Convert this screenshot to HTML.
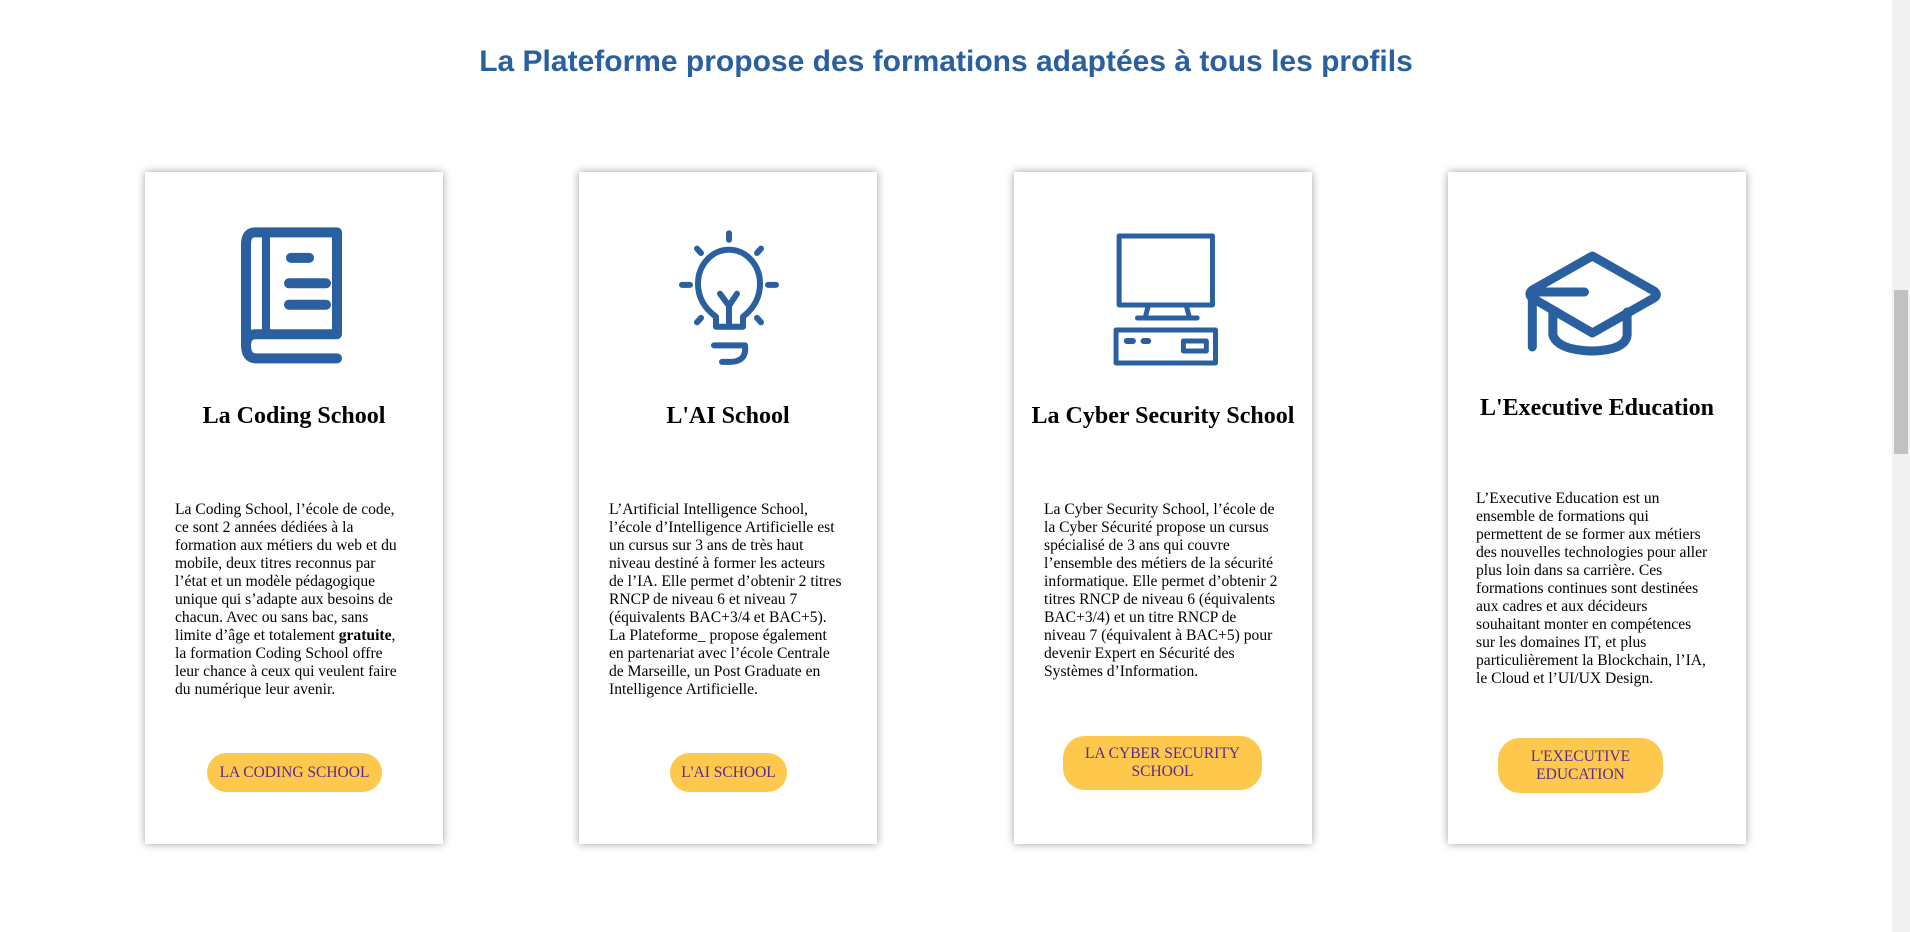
<!DOCTYPE html>
<html><head><meta charset="utf-8"><style>
html,body{margin:0;padding:0;width:1910px;height:932px;overflow:hidden;background:#fff;position:relative}
h1{position:absolute;left:0;width:1892px;top:45px;margin:0;text-align:center;font:bold 30px "Liberation Sans",sans-serif;color:#2a5fa0}
.card{position:absolute;top:172px;width:298px;height:672px;background:#fff;box-shadow:0 0 8px rgba(0,0,0,.38)}
.h{position:absolute;left:0;width:100%;text-align:center;font:bold 24px "Liberation Serif",serif;color:#000;white-space:nowrap}
.p{position:absolute;font:15.6px/18px "Liberation Serif",serif;color:#000;white-space:nowrap}
.b{position:absolute;background:#fdc84b;border-radius:22px;color:#5a2b8f;font:15.5px/18px "Liberation Serif",serif;text-align:center;display:flex;align-items:center;justify-content:center}
.sb{position:absolute;right:0;top:0;width:18px;height:932px;background:#f1f1f1}
.th{position:absolute;right:2px;top:290px;width:14px;height:164px;background:#c1c1c1}
svg{position:absolute;left:0;top:0}
svg *{vector-effect:non-scaling-stroke}
</style></head><body>
<h1>La Plateforme propose des formations adaptées à tous les profils</h1>

<div class="card" style="left:145px"></div>
<div class="card" style="left:579px"></div>
<div class="card" style="left:1014px"></div>
<div class="card" style="left:1448px"></div>

<div class="h" style="left:145px;width:298px;top:403px">La Coding School</div>
<div class="h" style="left:579px;width:298px;top:403px">L'AI School</div>
<div class="h" style="left:1014px;width:298px;top:403px">La Cyber Security School</div>
<div class="h" style="left:1448px;width:298px;top:395px">L'Executive Education</div>

<div class="p" style="left:175px;top:501px">La Coding School, l’école de code,<br>ce sont 2 années dédiées à la<br>formation aux métiers du web et du<br>mobile, deux titres reconnus par<br>l’état et un modèle pédagogique<br>unique qui s’adapte aux besoins de<br>chacun. Avec ou sans bac, sans<br>limite d’âge et totalement <b>gratuite</b>,<br>la formation Coding School offre<br>leur chance à ceux qui veulent faire<br>du numérique leur avenir.</div>
<div class="p" style="left:609px;top:501px">L’Artificial Intelligence School,<br>l’école d’Intelligence Artificielle est<br>un cursus sur 3 ans de très haut<br>niveau destiné à former les acteurs<br>de l’IA. Elle permet d’obtenir 2 titres<br>RNCP de niveau 6 et niveau 7<br>(équivalents BAC+3/4 et BAC+5).<br>La Plateforme_ propose également<br>en partenariat avec l’école Centrale<br>de Marseille, un Post Graduate en<br>Intelligence Artificielle.</div>
<div class="p" style="left:1044px;top:501px">La Cyber Security School, l’école de<br>la Cyber Sécurité propose un cursus<br>spécialisé de 3 ans qui couvre<br>l’ensemble des métiers de la sécurité<br>informatique. Elle permet d’obtenir 2<br>titres RNCP de niveau 6 (équivalents<br>BAC+3/4) et un titre RNCP de<br>niveau 7 (équivalent à BAC+5) pour<br>devenir Expert en Sécurité des<br>Systèmes d’Information.</div>
<div class="p" style="left:1476px;top:490px">L’Executive Education est un<br>ensemble de formations qui<br>permettent de se former aux métiers<br>des nouvelles technologies pour aller<br>plus loin dans sa carrière. Ces<br>formations continues sont destinées<br>aux cadres et aux décideurs<br>souhaitant monter en compétences<br>sur les domaines IT, et plus<br>particulièrement la Blockchain, l’IA,<br>le Cloud et l’UI/UX Design.</div>

<div class="b" style="left:207px;top:753px;width:175px;height:39px">LA CODING SCHOOL</div>
<div class="b" style="left:670px;top:753px;width:117px;height:39px">L'AI SCHOOL</div>
<div class="b" style="left:1063px;top:736px;width:199px;height:54px">LA CYBER SECURITY<br>SCHOOL</div>
<div class="b" style="left:1498px;top:738px;width:165px;height:55px">L'EXECUTIVE<br>EDUCATION</div>

<svg width="1910" height="932" fill="none" stroke="#2a5fa0" stroke-linecap="round" stroke-linejoin="round">
 <!-- book -->
 <g transform="translate(-2,227) scale(1,1.34) translate(0,-210)">
  <path stroke-width="10" d="M339 308 H258 Q248 308 248 298 V223 Q248 214 257 214 H339 V290 H258 Q248 290 248 299"/>
  <path d="M268 214 V290" stroke-width="8"/>
  <path stroke-width="10" d="M293 233 H311 M291 252 H328 M291 268 H328"/>
 </g>
 <!-- bulb -->
 <g stroke-width="6" transform="translate(0,231) scale(1,1.1) translate(0,-234)">
  <path d="M729 236 V242 M682 283 H690 M768 283 H776 M697 250 L701 254 M761 250 L757 254 M697 317 L701 313 M761 317 L757 313"/>
  <path d="M716 321 V312 Q698 300 698 282 A31 31 0 0 1 760 282 Q760 300 743 312 V321 Z"/>
  <path d="M720 291 L729 302 L737 291 M729 302 V319"/>
  <path d="M714 338 H745 Q747 353 730 353 H722"/>
 </g>
 <!-- computer -->
 <g stroke-width="5" transform="translate(1113,0) scale(1.53,1) translate(-1074,0)">
  <rect x="1078" y="236" width="61" height="69"/>
  <path d="M1097 306 L1095 318 M1122 306 L1124 318 M1090 318 H1129"/>
  <rect x="1076" y="330" width="65" height="33"/>
  <path d="M1083 341 H1087 M1094 341 H1097" stroke-width="6"/>
  <rect x="1120" y="341" width="15" height="10"/>
 </g>
 <!-- cap -->
 <g stroke-width="9" transform="translate(1526,0) scale(1.58,1) translate(-1350,0)">
  <path d="M1392 256 L1431 291 Q1434 295 1431 298 L1392 333 L1354 298 Q1351 294 1354 290 Z"/>
  <path d="M1354 293 V347 M1354 292 H1387"/>
  <path d="M1367 312 V335 Q1370 350 1392 351 Q1413 350 1414 335 V312"/>
 </g>
</svg>
<div class="sb"><div class="th"></div></div>
</body></html>
